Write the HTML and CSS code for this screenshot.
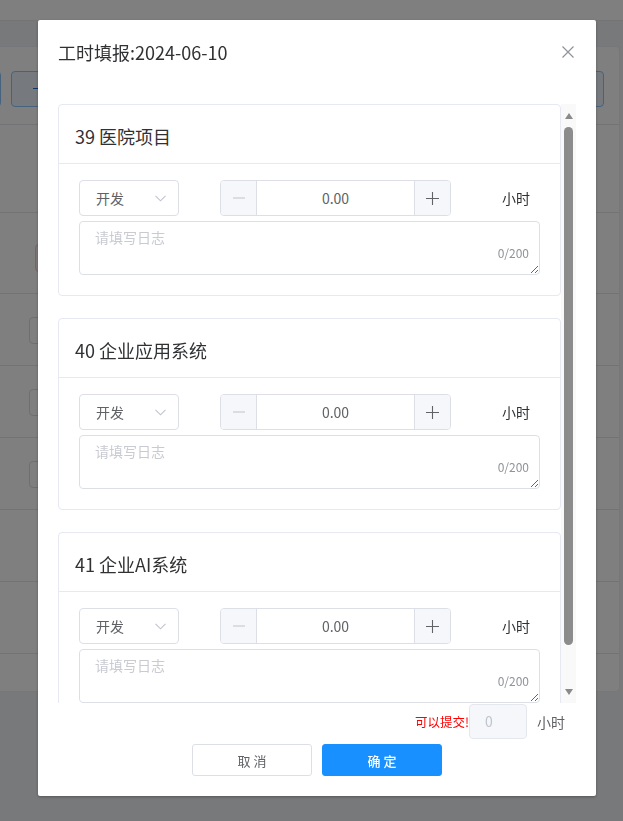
FILE: index.html
```html
<!DOCTYPE html>
<html lang="zh-CN">
<head>
<meta charset="utf-8">
<title>工时填报</title>
<link rel="stylesheet" href="styles.css">
</head>
<body>
<div class="page">
  <div class="topbar"></div>
  <div class="panel">
    <div class="toolbar">
      <div class="tb-left">
        <span class="tb-btn tb-a"></span>
        <span class="tb-btn tb-b"><span class="dash"></span></span>
      </div>
      <span class="tb-btn tb-c"></span>
    </div>
    <div class="table">
      <div class="trow h88"></div>
      <div class="trow h81"><span class="tag"></span></div>
      <div class="trow h72"><span class="mini"></span></div>
      <div class="trow h72"><span class="mini"></span></div>
      <div class="trow h72"><span class="mini"></span></div>
      <div class="trow h72"></div>
      <div class="trow h72"></div>
      <div class="trow last"></div>
    </div>
  </div>
</div>

<div class="overlay">
  <div class="dialog">
    <div class="dlg-header">
      <span class="dlg-title">工时填报:2024-06-10</span>
      <span class="dlg-close">
        <svg width="16" height="16" viewBox="0 0 16 16"><path d="M2.5 2.5 L13.5 13.5 M13.5 2.5 L2.5 13.5" stroke="#909399" stroke-width="1.2" fill="none"/></svg>
      </span>
    </div>
    <div class="dlg-body">
      <div class="scroll">
        <div class="cards">
          <div class="card">
            <div class="card-hd">39 医院项目</div>
            <div class="card-bd">
              <div class="row">
                <div class="select"><span>开发</span>
                  <svg width="11" height="7" viewBox="0 0 11 7"><path d="M0.5 0.8 L5.5 5.8 L10.5 0.8" stroke="#c0c4cc" stroke-width="1.1" fill="none"/></svg>
                </div>
                <div class="number">
                  <span class="num-btn minus"><svg width="12" height="12" viewBox="0 0 12 12"><path d="M0 6 H12" stroke="#c0c4cc" stroke-width="1.1"/></svg></span>
                  <span class="num-val">0.00</span>
                  <span class="num-btn plus"><svg width="13" height="13" viewBox="0 0 13 13"><path d="M0 6.5 H13 M6.5 0 V13" stroke="#606266" stroke-width="1.1"/></svg></span>
                </div>
                <span class="unit">小时</span>
              </div>
              <div class="ta-wrap">
                <textarea class="ta" placeholder="请填写日志"></textarea>
                <span class="count">0/200</span>
              </div>
            </div>
          </div>
          <div class="card">
            <div class="card-hd">40 企业应用系统</div>
            <div class="card-bd">
              <div class="row">
                <div class="select"><span>开发</span>
                  <svg width="11" height="7" viewBox="0 0 11 7"><path d="M0.5 0.8 L5.5 5.8 L10.5 0.8" stroke="#c0c4cc" stroke-width="1.1" fill="none"/></svg>
                </div>
                <div class="number">
                  <span class="num-btn minus"><svg width="12" height="12" viewBox="0 0 12 12"><path d="M0 6 H12" stroke="#c0c4cc" stroke-width="1.1"/></svg></span>
                  <span class="num-val">0.00</span>
                  <span class="num-btn plus"><svg width="13" height="13" viewBox="0 0 13 13"><path d="M0 6.5 H13 M6.5 0 V13" stroke="#606266" stroke-width="1.1"/></svg></span>
                </div>
                <span class="unit">小时</span>
              </div>
              <div class="ta-wrap">
                <textarea class="ta" placeholder="请填写日志"></textarea>
                <span class="count">0/200</span>
              </div>
            </div>
          </div>
          <div class="card">
            <div class="card-hd">41 企业AI系统</div>
            <div class="card-bd">
              <div class="row">
                <div class="select"><span>开发</span>
                  <svg width="11" height="7" viewBox="0 0 11 7"><path d="M0.5 0.8 L5.5 5.8 L10.5 0.8" stroke="#c0c4cc" stroke-width="1.1" fill="none"/></svg>
                </div>
                <div class="number">
                  <span class="num-btn minus"><svg width="12" height="12" viewBox="0 0 12 12"><path d="M0 6 H12" stroke="#c0c4cc" stroke-width="1.1"/></svg></span>
                  <span class="num-val">0.00</span>
                  <span class="num-btn plus"><svg width="13" height="13" viewBox="0 0 13 13"><path d="M0 6.5 H13 M6.5 0 V13" stroke="#606266" stroke-width="1.1"/></svg></span>
                </div>
                <span class="unit">小时</span>
              </div>
              <div class="ta-wrap">
                <textarea class="ta" placeholder="请填写日志"></textarea>
                <span class="count">0/200</span>
              </div>
            </div>
          </div>
        </div>
        <div class="vbar">
          <span class="arrow-box top"><span class="tri-up"></span></span>
          <span class="thumb"></span>
          <span class="spacer"></span>
          <span class="arrow-box bottom"><span class="tri-down"></span></span>
        </div>
      </div>
      <div class="submit-row">
        <span class="ok-msg">可以提交!</span>
        <span class="total">0</span>
        <span class="total-unit">小时</span>
      </div>
    </div>
    <div class="dlg-footer">
      <button class="btn btn-default">取 消</button>
      <button class="btn btn-primary">确 定</button>
    </div>
  </div>
</div>
</body>
</html>
```

FILE: styles.css
```css
* { box-sizing: border-box; }
html, body { margin: 0; padding: 0; }
body {
  width: 623px;
  height: 821px;
  overflow: hidden;
  background: #f0f2f5;
  font-family: "Noto Sans CJK SC", "Microsoft YaHei", "Noto Sans", sans-serif;
}

/* underlying page */
.page { height: 821px; }
.topbar { height: 21px; background: #fff; border-bottom: 1px solid #e8e8e8; }
.panel {
  margin: 25px 0 0 -10px;
  width: 630px;
  height: 646px;
  background: #fff;
  border: 1px solid #ebeef5;
  border-radius: 4px;
}
.toolbar {
  display: flex;
  justify-content: space-between;
  padding: 24px 15px 0 0;
}
.tb-left { display: flex; }
.tb-btn {
  display: block;
  height: 36px;
  border: 1px solid #8cc5ff;
  background: #ecf5ff;
  border-radius: 4px;
}
.tb-a { width: 10px; border-radius: 0 4px 4px 0; }
.tb-b { width: 90px; margin-left: 10px; padding: 16px 0 0 21px; }
.dash { display: block; width: 8px; height: 1px; background: #1f6fd1; }
.tb-c { width: 100px; }
.table { margin-top: 17px; }
.trow { border-top: 1px solid #e6e7ea; }
.h88 { height: 88px; }
.h81 { height: 81px; padding: 31px 0 0 44px; }
.h72 { height: 72px; padding: 23px 0 0 38px; }
.last { height: 38px; }
.tag {
  display: block;
  width: 50px;
  height: 28px;
  border: 1px solid #fbc4c4;
  background: #fef0f0;
  border-radius: 4px;
}
.mini {
  display: block;
  width: 50px;
  height: 27px;
  border: 1px solid #dcdfe6;
  border-radius: 4px;
}

/* overlay + dialog */
.overlay {
  position: fixed;
  inset: 0;
  background: rgba(0, 0, 0, 0.5);
}
.dialog {
  margin: 20px 0 0 38px;
  width: 558px;
  background: #fff;
  border-radius: 2px;
  box-shadow: 0 1px 3px rgba(0, 0, 0, 0.3);
}
.dlg-header {
  padding: 20px 20px 10px;
  display: flex;
  justify-content: space-between;
  align-items: flex-start;
}
.dlg-title {
  font-size: 18px;
  line-height: 24px;
  color: #303133;
}
.dlg-close { display: block; width: 16px; height: 16px; margin-top: 4px; }
.dlg-close svg { display: block; }

.dlg-body { padding: 30px 20px 0; }
.scroll { display: flex; height: 599px; }
.cards { width: 503px; overflow: hidden; }
.card {
  border: 1px solid #e6e8f2;
  border-radius: 4px;
  margin-bottom: 22px;
  background: #fff;
}
.card-hd {
  padding: 20px 16px 16px;
  font-size: 18px;
  line-height: 22px;
  color: #303133;
  border-bottom: 1px solid #e6e8f2;
}
.card-bd { padding: 16px 20px 20px; }
.row { display: flex; align-items: center; height: 36px; }
.select {
  width: 100px;
  height: 36px;
  border: 1px solid #dcdfe6;
  border-radius: 4px;
  display: flex;
  align-items: center;
  justify-content: space-between;
  padding: 0 12px 0 16px;
  font-size: 14px;
  color: #606266;
}
.select svg { display: block; }
.number {
  margin-left: 41px;
  width: 231px;
  height: 36px;
  border: 1px solid #dcdfe6;
  border-radius: 4px;
  display: flex;
  overflow: hidden;
}
.num-btn {
  width: 36px;
  background: #f5f7fa;
  display: flex;
  align-items: center;
  justify-content: center;
}
.num-btn svg { display: block; }
.minus { border-right: 1px solid #dcdfe6; }
.plus { border-left: 1px solid #dcdfe6; }
.num-val {
  flex: 1;
  text-align: center;
  line-height: 34px;
  font-size: 14px;
  color: #606266;
}
.unit { margin-left: 51px; font-size: 14px; color: #303133; }

.ta-wrap { position: relative; margin-top: 5px; }
.ta {
  display: block;
  width: 100%;
  height: 54px;
  border: 1px solid #dcdfe6;
  border-radius: 4px;
  padding: 5px 15px;
  font-family: inherit;
  font-size: 14px;
  line-height: 21px;
  color: #606266;
  resize: vertical;
  outline: none;
}
.ta::placeholder { color: #c8cbd2; }
.count {
  position: absolute;
  right: 11px;
  bottom: 15px;
  font-size: 12px;
  line-height: 14px;
  color: #909399;
  background: #fff;
}

.vbar {
  width: 15px;
  background: #f9f9f9;
  display: flex;
  flex-direction: column;
  align-items: center;
}
.arrow-box { display: flex; align-items: center; justify-content: center; width: 15px; }
.arrow-box.top { height: 23px; }
.arrow-box.bottom { height: 22px; }
.tri-up {
  width: 0; height: 0;
  border-left: 4.5px solid transparent;
  border-right: 4.5px solid transparent;
  border-bottom: 6px solid #8a8a8a;
}
.tri-down {
  width: 0; height: 0;
  border-left: 4.5px solid transparent;
  border-right: 4.5px solid transparent;
  border-top: 6px solid #8a8a8a;
}
.thumb {
  display: block;
  width: 9px;
  height: 518px;
  background: #8c8c8c;
  border-radius: 5px;
}
.spacer { flex: 1; }

.submit-row {
  margin-top: 1px;
  height: 35px;
  display: flex;
  justify-content: flex-end;
  align-items: center;
  padding-right: 11px;
}
.ok-msg { font-size: 12.5px; color: #ff0000; }
.total {
  width: 58px;
  height: 35px;
  border: 1px solid #e4e7ed;
  border-radius: 4px;
  background: #f5f7fa;
  padding-left: 15px;
  font-size: 14px;
  line-height: 33px;
  color: #c0c4cc;
}
.total-unit { margin-left: 10px; font-size: 14px; color: #606266; }

.dlg-footer {
  padding: 5px 20px 20px;
  display: flex;
  justify-content: center;
  gap: 10px;
}
.btn {
  width: 120px;
  height: 32px;
  border-radius: 3px;
  font-family: inherit;
  font-size: 13px;
  padding: 0;
  cursor: pointer;
}
.btn-default { border: 1px solid #dcdfe6; background: #fff; color: #606266; }
.btn-primary { border: 1px solid #1890ff; background: #1890ff; color: #fff; font-weight: 500; }
```
